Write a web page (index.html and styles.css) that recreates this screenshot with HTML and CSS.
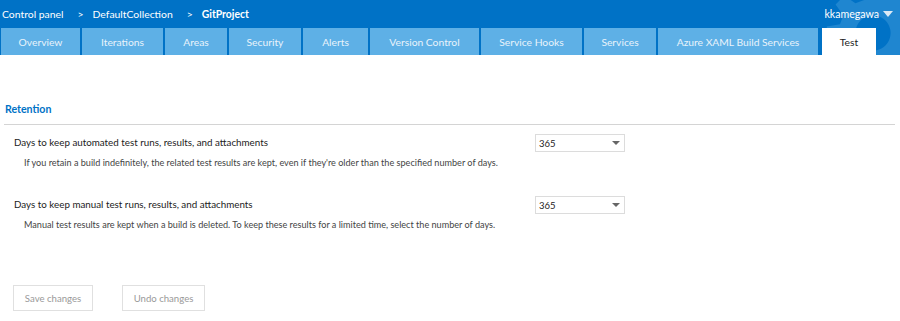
FILE: index.html
```html
<!DOCTYPE html>
<html lang="en">
<head>
    <meta charset="UTF-8">
    <link rel="stylesheet" href="styles.css">
    <title>Control panel - GitProject - Test</title>
</head>
<body>
    <div class="top">
        <div class="header">
            <div class="breadcrumb">
                <span>Control panel</span>
                <span class="sep">&gt;</span>
                <span>DefaultCollection</span>
                <span class="sep">&gt;</span>
                <span class="current">GitProject</span>
            </div>
            <div class="user">kkamegawa <span class="caret"></span></div>
        </div>
        <div class="tabs">
            <a class="tab w-overview">Overview</a>
            <a class="tab w-iterations">Iterations</a>
            <a class="tab w-areas">Areas</a>
            <a class="tab w-security">Security</a>
            <a class="tab w-alerts">Alerts</a>
            <a class="tab w-version">Version Control</a>
            <a class="tab w-hooks">Service Hooks</a>
            <a class="tab w-services">Services</a>
            <a class="tab w-xaml">Azure XAML Build Services</a>
            <a class="tab w-test active">Test</a>
        </div>
        <svg class="gear" viewBox="0 0 100 100" width="110" height="110">
            <path d="M44 4h12l2 12 8 3 10-7 8 8-7 10 3 8 12 2v12l-12 2-3 8 7 10-8 8-10-7-8 3-2 12H44l-2-12-8-3-10 7-8-8 7-10-3-8-12-2V44l12-2 3-8-7-10 8-8 10 7 8-3z M50 34a16 16 0 1 0 0.01 0z" fill-rule="evenodd"/>
        </svg>
    </div>

    <div class="content">
        <h2 class="section-title">Retention</h2>

        <div class="row">
            <div class="row-text">
                <div class="label">Days to keep automated test runs, results, and attachments</div>
                <div class="help">If you retain a build indefinitely, the related test results are kept, even if they're older than the specified number of days.</div>
            </div>
            <div class="combo">365 <span class="arrow"></span></div>
        </div>

        <div class="row">
            <div class="row-text">
                <div class="label">Days to keep manual test runs, results, and attachments</div>
                <div class="help">Manual test results are kept when a build is deleted. To keep these results for a limited time, select the number of days.</div>
            </div>
            <div class="combo">365 <span class="arrow"></span></div>
        </div>

        <div class="actions">
            <button class="btn w-save" disabled>Save changes</button>
            <button class="btn w-undo" disabled>Undo changes</button>
        </div>
    </div>
</body>
</html>
```

FILE: styles.css
```css
body {
    margin: 0;
    font-family: Lato, "Open Sans", sans-serif;
    font-size: 10px;
    color: #222;
    background-color: white;
}

.top {
    position: relative;
    background-color: #0072c6;
    overflow: hidden;
}

/* faint watermark gear behind the user name */
.gear {
    position: absolute;
    left: 818px;
    top: -22px;
    fill: #1f86d0;
}

.header {
    height: 28px;
    display: flex;
    justify-content: space-between;
    align-items: center;
    padding: 0 7px 0 2px;
    color: white;
    font-size: 10.4px;
}

.breadcrumb {
    display: flex;
}

.breadcrumb .sep {
    margin: 0 9px 0 14px;
}

.breadcrumb .current {
    font-weight: bold;
}

.user {
    position: relative;
    z-index: 1;
    display: flex;
    align-items: center;
    font-size: 10.6px;
}

.caret {
    display: inline-block;
    margin-left: 4px;
    width: 0;
    height: 0;
    border-left: 5px solid transparent;
    border-right: 5px solid transparent;
    border-top: 6px solid #dce9f5;
}

.tabs {
    position: relative;
    z-index: 1;
    display: flex;
    gap: 2px;
    padding-left: 1px;
    height: 27px;
}

.tab {
    display: flex;
    align-items: center;
    justify-content: center;
    background-color: #5eb0e6;
    color: #e9f3fb;
    font-size: 10.3px;
}

.tab.active {
    background-color: white;
    color: #222;
    margin-left: 2px;
}

.w-overview { width: 79px; }
.w-iterations { width: 81px; }
.w-areas { width: 62px; }
.w-security { width: 72px; }
.w-alerts { width: 65px; }
.w-version { width: 109px; }
.w-hooks { width: 101px; }
.w-services { width: 72px; }
.w-xaml { width: 160px; }
.w-test { width: 54px; }

.content {
    margin: 0 5px 0 4px;
    padding-top: 46px;
}

.section-title {
    margin: 0;
    padding: 0 0 7px 1px;
    font-size: 10.6px;
    line-height: 16px;
    font-weight: bold;
    color: #0072c6;
    border-bottom: 1px solid #d4d4d4;
}

.row {
    display: flex;
    padding-left: 10px;
    margin-top: 9px;
    margin-bottom: 26px;
}

.row-text {
    width: 521px;
}

.label {
    font-size: 9.8px;
    line-height: 16px;
}

.help {
    margin-top: 6px;
    padding-left: 10px;
    font-size: 9.1px;
    line-height: 14px;
    color: #444;
}

.combo {
    box-sizing: border-box;
    width: 90px;
    height: 18px;
    border: 1px solid #dcdcdc;
    padding: 0 4px 0 3px;
    display: flex;
    align-items: center;
    justify-content: space-between;
    font-size: 9.5px;
}

.arrow {
    width: 0;
    height: 0;
    border-left: 4px solid transparent;
    border-right: 4px solid transparent;
    border-top: 4px solid #666;
}

.actions {
    display: flex;
    gap: 29px;
    padding-left: 9px;
    margin-top: 53px;
}

.btn {
    box-sizing: border-box;
    height: 26px;
    background-color: white;
    border: 1px solid #e0e0e0;
    color: #999;
    font-family: inherit;
    font-size: 9.6px;
    padding: 0;
}

.w-save { width: 80px; }
.w-undo { width: 83px; }
```
